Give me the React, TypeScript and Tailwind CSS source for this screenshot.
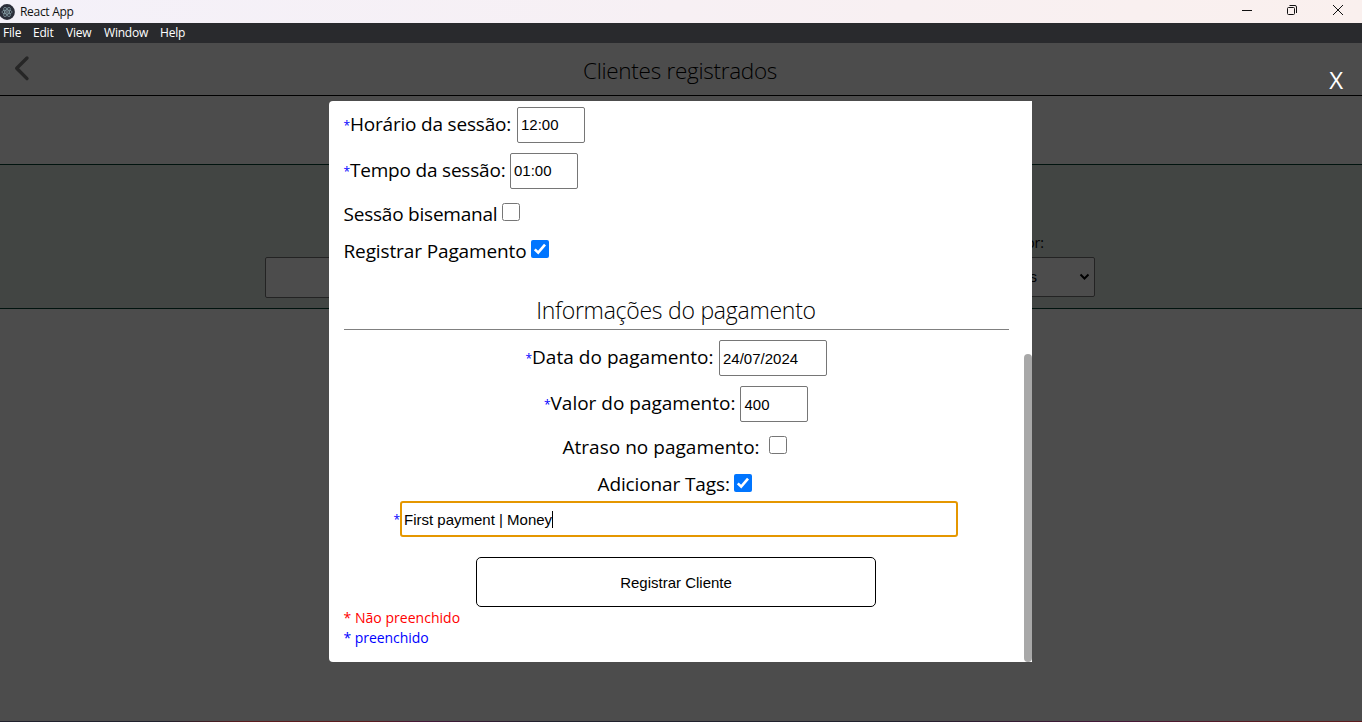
import type { ReactNode } from "react";

const segoe = "font-['Open_Sans','Noto_Sans',sans-serif]";
const arial = "font-['Liberation_Sans',Arial,sans-serif]";

function ElectronIcon() {
  return (
    <svg width="16" height="16" viewBox="0 0 16 16" className="-ml-px shrink-0">
      <circle cx="8" cy="8" r="7.9" fill="#2b2e3a" />
      <g fill="none" stroke="#8ba5ac" strokeWidth="0.7">
        <ellipse cx="8" cy="8" rx="5.2" ry="2" />
        <ellipse cx="8" cy="8" rx="5.2" ry="2" transform="rotate(60 8 8)" />
        <ellipse cx="8" cy="8" rx="5.2" ry="2" transform="rotate(120 8 8)" />
      </g>
      <circle cx="8" cy="8" r="0.8" fill="#9fb8be" />
    </svg>
  );
}

function TitleBar() {
  return (
    <div className="flex h-[23px] shrink-0 items-center justify-between bg-linear-to-r from-[#f4f1f9] via-[#f7f0f4] to-[#faf0ee]">
      <div className="flex items-center gap-[5px]">
        <ElectronIcon />
        <span className={`${segoe} text-[12px] leading-none tracking-[-0.3px] text-[#111]`}>React App</span>
      </div>
      <div className="flex h-full items-center pr-[18px] pb-[3px]">
        <svg width="12" height="12" viewBox="0 0 12 12" className="mr-[33px]"><path d="M1 6.5H11" stroke="#111" /></svg>
        <svg width="12" height="12" viewBox="0 0 12 12" fill="none" stroke="#111" className="mr-[34px]">
          <rect x="1.5" y="3.5" width="7" height="7" rx="1" />
          <path d="M3.5 1.5H9A1.5 1.5 0 0 1 10.5 3V9" />
        </svg>
        <svg width="12" height="12" viewBox="0 0 12 12"><path d="M1 1L11 11M11 1L1 11" stroke="#111" /></svg>
      </div>
    </div>
  );
}

function MenuBar() {
  return (
    <div className={`${segoe} flex h-5 shrink-0 items-center bg-[#292a2d] pl-[3px] text-[12px] leading-none tracking-[-0.2px] text-white`}>
      <span className="w-[30px]">File</span>
      <span className="w-[33px]">Edit</span>
      <span className="w-[38px]">View</span>
      <span className="w-[56px]">Window</span>
      <span>Help</span>
    </div>
  );
}

function Page() {
  return (
    <div className="flex flex-1 flex-col bg-white">
      <header className="grid h-[53px] grid-cols-[48px_1fr_50px] border-b border-black">
        <svg width="48" height="52" viewBox="0 0 48 52" fill="none">
          <path d="M27 15L16.7 25.2L27 35.6" stroke="#808080" strokeWidth="3.4" strokeLinecap="round" strokeLinejoin="round" />
        </svg>
        <h1 className={`${segoe} pt-[2px] text-center text-[22.5px] leading-[52px] font-light tracking-[-0.28px]`}>Clientes registrados</h1>
      </header>
      <div className="h-[68px]" />
      <section className="flex h-[145px] items-end justify-between border-y border-[#004030] bg-[#dce7e1] pr-[267px] pb-[10px] pl-[265px]">
        <div className="h-[41px] w-[380px] rounded-[2px] border border-[#767676] bg-white" />
        <div className="flex flex-col">
          <span className={`${segoe} pr-[51px] pb-1 text-right text-[14px] leading-5`}>Ordenar por:</span>
          <div className={`${arial} mb-px flex h-10 w-[160px] items-center justify-between rounded-[2px] border border-[#767676] bg-white pr-1 pl-[61px] text-[15px]`}>
            <span className="flex w-[40px] justify-end">Todos</span>
            <svg width="11" height="8" viewBox="0 0 11 8" fill="none"><path d="M1.5 1.5L5.5 5.5L9.5 1.5" stroke="black" strokeWidth="2" /></svg>
          </div>
        </div>
      </section>
    </div>
  );
}

function Check({ on, className }: { on?: boolean; className: string }) {
  return on ? (
    <svg width="18" height="18" viewBox="0 0 18 18" className={`shrink-0 ${className}`}>
      <rect width="18" height="18" rx="2" fill="#0075ff" />
      <path d="M3.8 9.3L7.2 12.7L14 4.6" fill="none" stroke="white" strokeWidth="2.6" />
    </svg>
  ) : (
    <span className={`size-[18px] shrink-0 rounded-[2.5px] border border-[#767676] bg-white ${className}`} />
  );
}

function Box({ className, children }: { className: string; children: ReactNode }) {
  return (
    <div className={`${arial} ${className} flex h-9 shrink-0 items-center rounded-[2px] border border-[#767676] pl-[3.5px] text-[15px] tracking-normal`}>
      {children}
    </div>
  );
}

function Label({ star, className, children }: { star?: boolean; className: string; children: ReactNode }) {
  return (
    <span className={`${className} flex shrink-0 items-center whitespace-nowrap`}>
      {star && <span className="w-[6.5px] pt-[3px] text-[12px] leading-none text-[#0000ff]">*</span>}
      <span>{children}</span>
    </span>
  );
}

function Modal() {
  return (
    <div className={`${segoe} flex h-[561px] w-[703px] overflow-hidden rounded-l-[4px] bg-white text-[19px] leading-7 text-black`}>
      <div className="flex flex-1 flex-col px-[15px] pt-[6px]">
        <div className="flex h-9 items-center">
          <Label star className="w-[173px] pb-[2px] tracking-[-0.2px]">Horário da sessão:</Label>
          <Box className="w-[68px]">12:00</Box>
        </div>
        <div className="mt-[10px] flex h-9 items-center">
          <Label star className="w-[166px] pb-[2px] tracking-[-0.2px]">Tempo da sessão:</Label>
          <Box className="w-[68px]">01:00</Box>
        </div>
        <div className="mt-[11px] flex h-7 items-center">
          <Label className="w-[158px] tracking-[-0.22px]">Sessão bisemanal</Label>
          <Check className="mb-[5px]" />
        </div>
        <div className="mt-[9px] flex h-7 items-center">
          <Label className="w-[187px] tracking-[-0.12px]">Registrar Pagamento</Label>
          <Check on className="mb-[5px]" />
        </div>
        <h2 className="mt-[28px] h-[37px] border-b border-[#808080] text-center text-[23px] leading-[34px] font-light tracking-[-0.26px]">Informações do pagamento</h2>
        <div className="mt-[10px] flex h-9 items-center justify-center">
          <Label star className="w-[193px] pb-[2px] tracking-[0.04px]">Data do pagamento:</Label>
          <Box className="w-[108px] pt-[2px]">24/07/2024</Box>
        </div>
        <div className="mt-[10px] flex h-9 items-center justify-center">
          <Label star className="w-[196px] pb-[2px]">Valor do pagamento:</Label>
          <Box className="w-[68px] pt-[2px]">400</Box>
        </div>
        <div className="mt-[11px] flex h-7 items-center justify-center pr-[3px]">
          <Label className="w-[207px] pl-[0.5px] tracking-[0.02px]">Atraso no pagamento:</Label>
          <Check className="mb-[5px]" />
        </div>
        <div className="mt-[9px] flex h-7 items-center justify-center pr-[3px]">
          <Label className="w-[137px] pl-[0.5px] tracking-[-0.12px]">Adicionar Tags:</Label>
          <Check on className="mb-[3px]" />
        </div>
        <div className="mt-[3px] flex h-9 items-center pl-[50px]">
          <span className="w-[6px] pt-px text-[12px] leading-none text-[#0000ff]">*</span>
          <div className={`${arial} flex h-9 w-[558px] items-center rounded-[3px] border-2 border-[#e59700] pt-[2px] pl-[2.5px] text-[15px]`}>
            <span>First payment | Money</span>
            <span className="mb-px h-[17px] w-px bg-black" />
          </div>
        </div>
        <button className={`${arial} mt-5 h-[50px] w-[400px] self-center rounded-[5px] border border-black pt-[2px] text-[15px]`}>Registrar Cliente</button>
        <div className="mt-px text-[14px] leading-5">
          <p className="tracking-[0.03px] text-[#ff0000]">* Não preenchido</p>
          <p className="tracking-[-0.05px] text-[#0000ff]">* preenchido</p>
        </div>
      </div>
      <div className="flex w-2 flex-col justify-end">
        <div className="h-[308px] rounded-[4px] bg-[#a8a8a8]" />
      </div>
    </div>
  );
}

export default function App() {
  return (
    <div className="relative flex h-[722px] w-[1362px] flex-col overflow-hidden">
      <TitleBar />
      <MenuBar />
      <Page />
      <div className="absolute inset-x-0 top-[43px] bottom-0 flex justify-center bg-black/70 pt-[58px] pr-[2px]">
        <Modal />
        <span className={`${segoe} absolute top-[20px] right-[19px] text-[24px] leading-[34px] text-white`}>X</span>
        <div className="absolute inset-x-0 bottom-0 h-[1.5px] bg-[linear-gradient(90deg,#20202c_12%,#5c1c1e_18%,#5c1c1e_27%,#451838_31%,#20202c_40%,#20202c_65%,#451838_82%,#5c1c1e_94%)]" />
      </div>
    </div>
  );
}
